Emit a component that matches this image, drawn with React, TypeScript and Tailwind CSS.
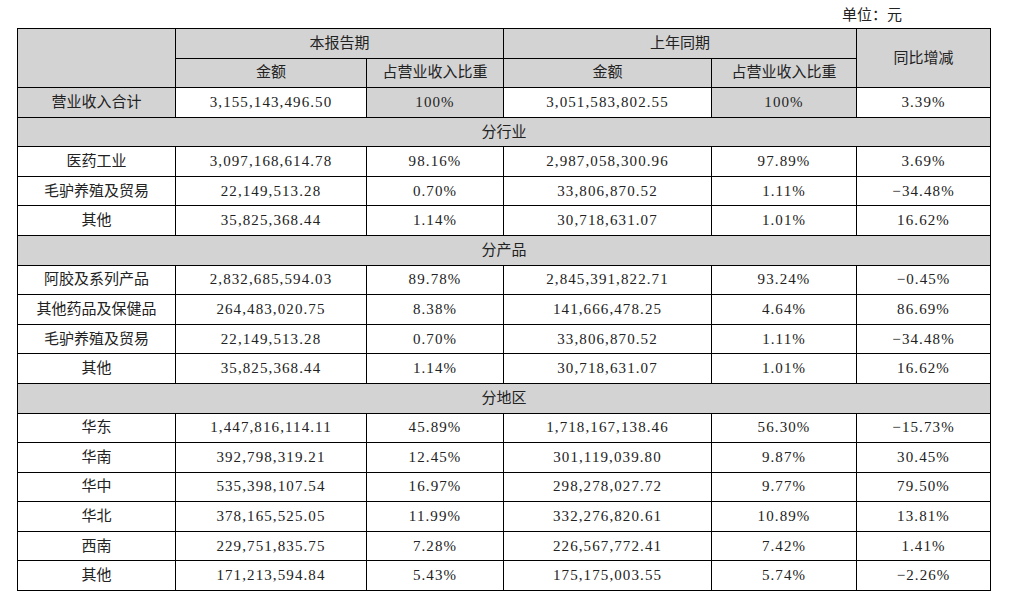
const industry = [
  ["医药工业", "3,097,168,614.78", "98.16%", "2,987,058,300.96", "97.89%", "3.69%"],
  ["毛驴养殖及贸易", "22,149,513.28", "0.70%", "33,806,870.52", "1.11%", "-34.48%"],
  ["其他", "35,825,368.44", "1.14%", "30,718,631.07", "1.01%", "16.62%"],
]

const products = [
  ["阿胶及系列产品", "2,832,685,594.03", "89.78%", "2,845,391,822.71", "93.24%", "-0.45%"],
  ["其他药品及保健品", "264,483,020.75", "8.38%", "141,666,478.25", "4.64%", "86.69%"],
  ["毛驴养殖及贸易", "22,149,513.28", "0.70%", "33,806,870.52", "1.11%", "-34.48%"],
  ["其他", "35,825,368.44", "1.14%", "30,718,631.07", "1.01%", "16.62%"],
]

const regions = [
  ["华东", "1,447,816,114.11", "45.89%", "1,718,167,138.46", "56.30%", "-15.73%"],
  ["华南", "392,798,319.21", "12.45%", "301,119,039.80", "9.87%", "30.45%"],
  ["华中", "535,398,107.54", "16.97%", "298,278,027.72", "9.77%", "79.50%"],
  ["华北", "378,165,525.05", "11.99%", "332,276,820.61", "10.89%", "13.81%"],
  ["西南", "229,751,835.75", "7.28%", "226,567,772.41", "7.42%", "1.41%"],
  ["其他", "171,213,594.84", "5.43%", "175,175,003.55", "5.74%", "-2.26%"],
]

const cell = "border border-black text-center align-middle p-0 h-[29.58px]"
const num = "tracking-[1.1px]"

function Section({ title }: { title: string }) {
  return (
    <tr>
      <td colSpan={6} className={`${cell} bg-[#d3d3d3]`}>
        {title}
      </td>
    </tr>
  )
}

function Rows({ rows }: { rows: string[][] }) {
  return (
    <>
      {rows.map((r, i) => (
        <tr key={i}>
          <td className={cell}>{r[0]}</td>
          {r.slice(1).map((v, j) => (
            <td key={j} className={`${cell} ${num}`}>
              {v.replace(/^-/, "−")}
            </td>
          ))}
        </tr>
      ))}
    </>
  )
}

export default function App() {
  return (
    <div
      className="w-[1009px] h-[602px] bg-white text-[15px] leading-none text-[#222]"
      style={{ fontFamily: '"Liberation Serif", "Noto Sans CJK SC", serif' }}
    >
      <div className="h-[28px] flex items-center justify-end pr-[107px] pt-[2px]">单位：元</div>
      <table className="ml-[17px] w-[973px] table-fixed border-collapse">
        <colgroup>
          <col className="w-[158px]" />
          <col className="w-[191px]" />
          <col className="w-[137px]" />
          <col className="w-[208px]" />
          <col className="w-[145px]" />
          <col className="w-[134px]" />
        </colgroup>
        <tbody>
          <tr className="bg-[#d3d3d3]">
            <td rowSpan={2} className={cell}></td>
            <td colSpan={2} className={cell}>本报告期</td>
            <td colSpan={2} className={cell}>上年同期</td>
            <td rowSpan={2} className={cell}>同比增减</td>
          </tr>
          <tr className="bg-[#d3d3d3]">
            <td className={cell}>金额</td>
            <td className={cell}>占营业收入比重</td>
            <td className={cell}>金额</td>
            <td className={cell}>占营业收入比重</td>
          </tr>
          <tr>
            <td className={`${cell} bg-[#d3d3d3]`}>营业收入合计</td>
            <td className={`${cell} ${num}`}>3,155,143,496.50</td>
            <td className={`${cell} ${num} bg-[#d3d3d3]`}>100%</td>
            <td className={`${cell} ${num}`}>3,051,583,802.55</td>
            <td className={`${cell} ${num} bg-[#d3d3d3]`}>100%</td>
            <td className={`${cell} ${num}`}>3.39%</td>
          </tr>
          <Section title="分行业" />
          <Rows rows={industry} />
          <Section title="分产品" />
          <Rows rows={products} />
          <Section title="分地区" />
          <Rows rows={regions} />
        </tbody>
      </table>
    </div>
  )
}
